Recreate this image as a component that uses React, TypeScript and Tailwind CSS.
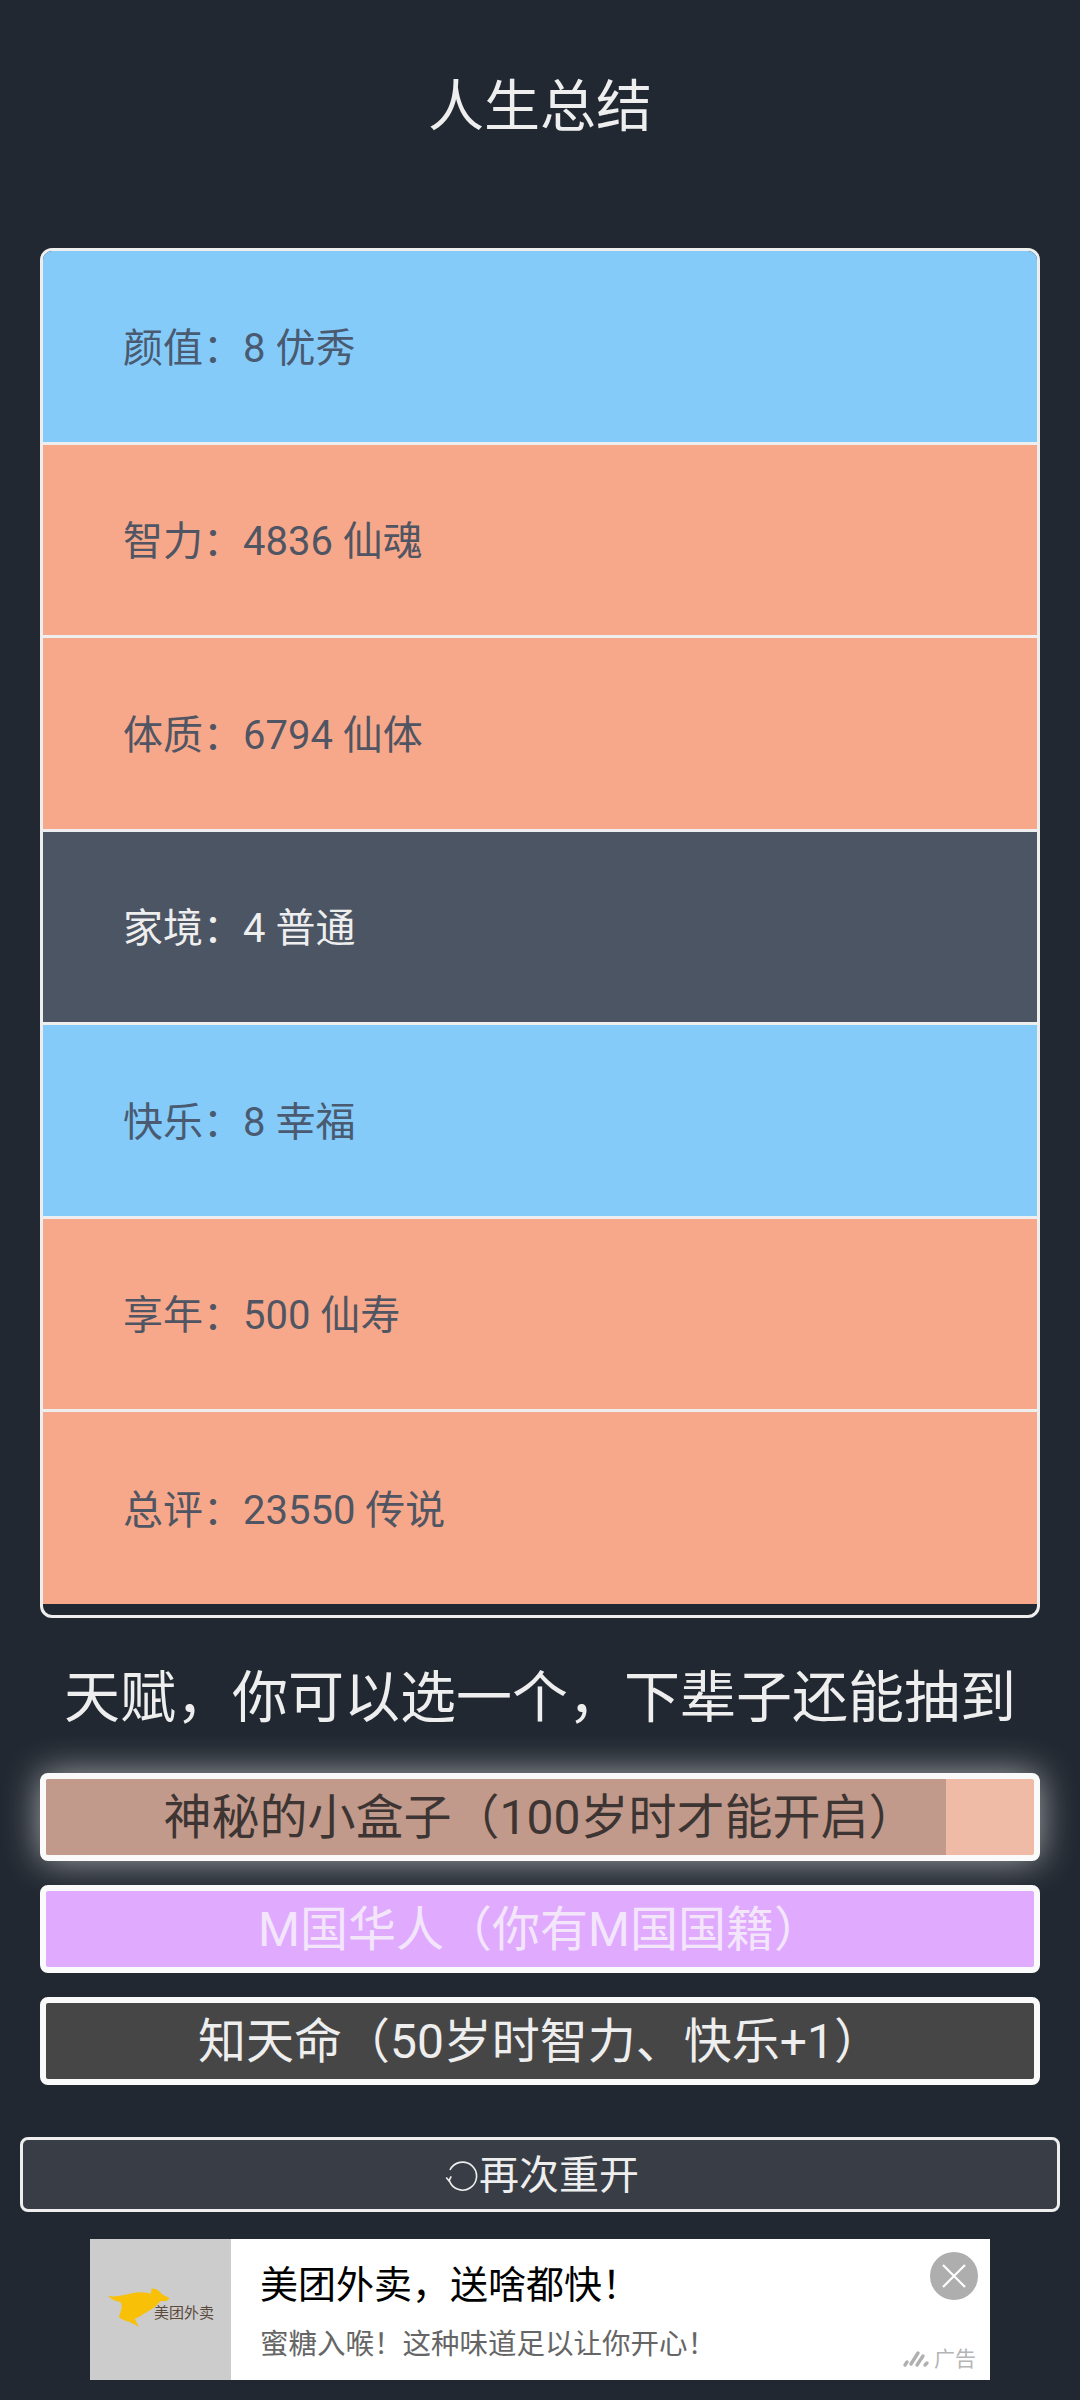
const rows = [
  { text: "颜值：8 优秀", tone: "bg-[#84cbfa] text-[#4a5a70]" },
  { text: "智力：4836 仙魂", tone: "bg-[#f8a88a] text-[#4f5562]" },
  { text: "体质：6794 仙体", tone: "bg-[#f8a88a] text-[#4f5562]" },
  { text: "家境：4 普通", tone: "bg-[#4b5563] text-[#eeeeee]" },
  { text: "快乐：8 幸福", tone: "bg-[#84cbfa] text-[#4a5a70]" },
  { text: "享年：500 仙寿", tone: "bg-[#f8a88a] text-[#4f5562]" },
  { text: "总评：23550 传说", tone: "bg-[#f8a88a] text-[#4f5562]" },
];

const App = () => {
  return (
    <div className="flex h-[2400px] w-[1080px] flex-col items-center overflow-hidden bg-[#222831] font-['Roboto','Noto_Sans_CJK_SC',sans-serif] text-[#eeeeee]">
      {/* Title */}
      <div className="flex h-[248px] w-full justify-center pt-[65px] text-[56px] leading-[84px]">人生总结</div>

      {/* Summary list */}
      <div className="h-[1370px] w-[1000px] overflow-hidden rounded-[12px] border-[3px] border-[#eeeeee]">
        {rows.map((row, i) => (
          <div
            key={row.text}
            className={`flex items-center pl-[80px] pt-[5px] text-[40px] ${row.tone} ${i < 6 ? "h-[193.5px] border-b-[3px] border-[#eeeeee]" : "h-[192px]"}`}
          >
            {row.text}
          </div>
        ))}
      </div>

      {/* Talents */}
      <div className="flex h-[155px] w-full items-center justify-center pt-[4px] text-[56px]">天赋，你可以选一个，下辈子还能抽到</div>
      <div className="flex w-[1000px] flex-col gap-[24px]">
        <div className="relative flex h-[88px] items-center justify-center overflow-hidden rounded-[8px] border-[6px] border-[#fafafa] bg-[#efbba7] pt-[1px] text-[48px] text-[#3d3533] shadow-[0_0_36px_rgba(255,255,255,0.6)]">
          <div className="absolute inset-y-0 left-0 w-[900px] bg-[#c29a8b]"></div>
          <span className="relative">神秘的小盒子（100岁时才能开启）</span>
        </div>
        <div className="flex h-[88px] items-center justify-center rounded-[8px] border-[6px] border-[#fafafa] bg-[#e0aaff] pt-[1px] text-[48px] text-[#f3e6fb]">
          M国华人（你有M国国籍）
        </div>
        <div className="flex h-[88px] items-center justify-center rounded-[8px] border-[6px] border-[#fafafa] bg-[#464646] pt-[1px] text-[48px] text-[#eeeeee]">
          知天命（50岁时智力、快乐+1）
        </div>
      </div>

      {/* Restart */}
      <div className="mt-[52px] flex h-[75px] w-[1040px] items-center justify-center rounded-[8px] border-[3px] border-[#eeeeee] bg-[#393e46] pl-[2px] pt-[2px] text-[40px]">
        <svg width="36" height="32" viewBox="0 0 36 32" fill="none" stroke="#eeeeee" strokeWidth="1.6" className="shrink-0">
          <path d="M7 10 A14 14 0 1 1 6.3 20.5" />
          <path d="M3.2 17.4 L6 20.7 L8.2 16.4" />
        </svg>
        <span>再次重开</span>
      </div>

      {/* Ad */}
      <div className="mt-[27px] flex h-[141px] w-[900px] bg-white">
        <div className="relative h-full w-[141px] shrink-0 bg-[#cccccc]">
          <svg width="62" height="40" viewBox="85 175 186 118" className="absolute left-[18px] top-[49px]">
            <path
              fill="#f8c006"
              d="M85 197 C110 203 130 195 160 189 C185 185 205 188 213 192 L216 176 C228 174 240 184 247 193 L270 205 L262 212 L242 214 C232 226 218 238 198 248 C188 254 178 262 165 266 L178 290 L150 276 C135 272 125 268 118 262 C122 245 132 228 122 216 C108 214 95 208 85 197 Z"
            />
          </svg>
          <span className="absolute left-[64px] top-[64px] text-[15px] leading-[20px] whitespace-nowrap text-[#5a4a3c]">美团外卖</span>
        </div>
        <div className="relative flex-1 pl-[29px]">
          <div className="pt-[20px] text-[38px] leading-[52px] text-black">美团外卖，送啥都快！</div>
          <div className="mt-[14px] text-[28.5px] leading-[40px] text-[#666666]">蜜糖入喉！这种味道足以让你开心！</div>
          <div className="absolute right-[12px] top-[13px] flex h-[48px] w-[48px] items-center justify-center rounded-full bg-[#aeaeae]">
            <svg width="26" height="26" viewBox="0 0 26 26" stroke="white" strokeWidth="2.2">
              <path d="M2 2 L24 24 M24 2 L2 24" />
            </svg>
          </div>
          <div className="absolute bottom-[7px] right-[14px] flex items-center gap-[4px] text-[21px] leading-[28px] text-[#b5b5b5]">
            <svg width="28" height="20" viewBox="0 0 26 20" stroke="#b0b0b0" strokeWidth="3.4" strokeLinecap="round">
              <path d="M2 16 L4 13 M8 15 L15 4 M14 16 L20 7 M22 16 L24 14" />
            </svg>
            <span>广告</span>
          </div>
        </div>
      </div>
    </div>
  );
};

export default App;
